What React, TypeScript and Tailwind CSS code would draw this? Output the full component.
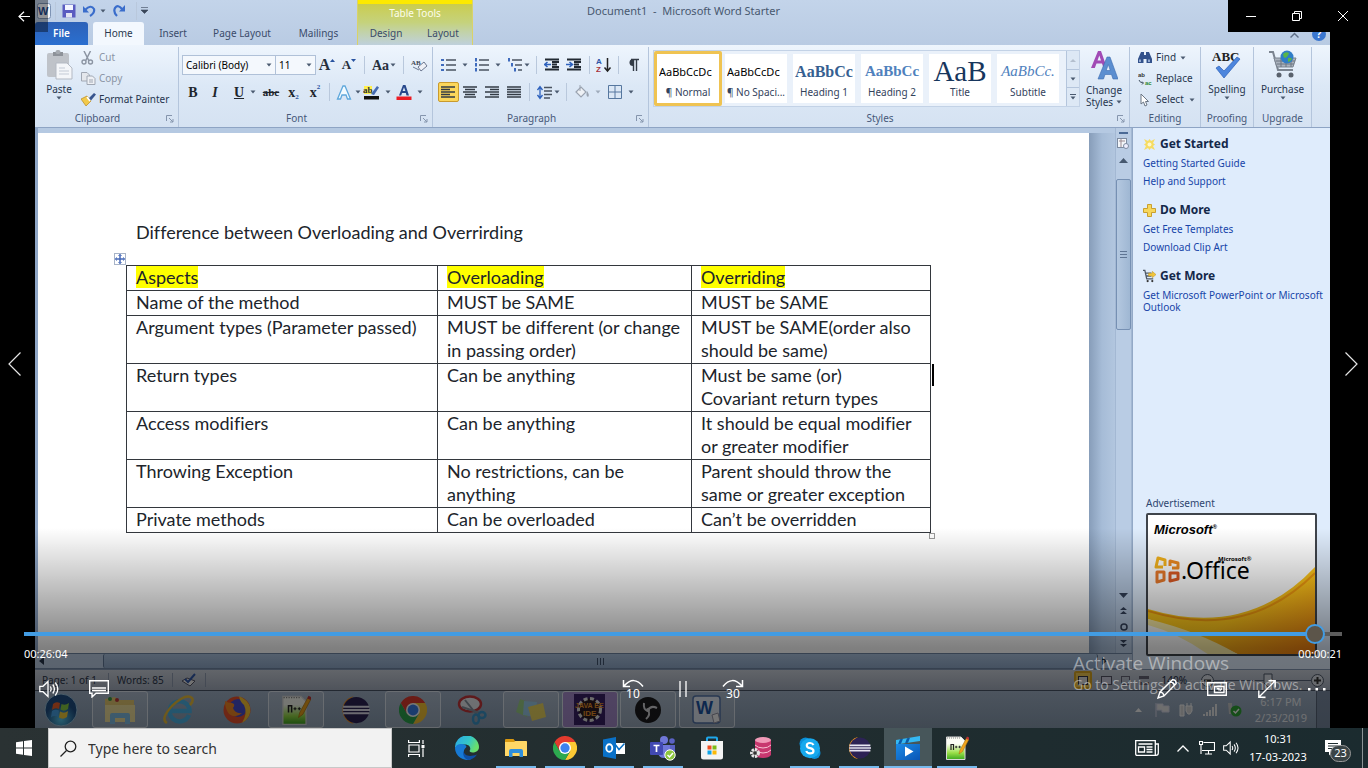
import React from "react";

type Kids = { children?: React.ReactNode };

const ui = "font-['Noto_Sans','Open_Sans',sans-serif]";

/* ---------- shared app icons ---------- */

function ChromeIcon({ size = 24 }: { size?: number }) {
  return (
    <svg width={size} height={size} viewBox="0 0 48 48" aria-hidden="true">
      <path d="M24 12H44.8A24 24 0 0 1 24 48L34.4 30Z" fill="#fcc934" />
      <path d="M13.6 30 3.2 12A24 24 0 0 0 24 48L34.4 30Z" fill="#2da94f" />
      <path d="M3.2 12A24 24 0 0 1 44.8 12H24L13.6 30Z" fill="#e33b2e" />
      <circle cx="24" cy="24" r="12" fill="#fff" />
      <circle cx="24" cy="24" r="9.3" fill="#3b82ee" />
    </svg>
  );
}

function EclipseIcon({ size = 24 }: { size?: number }) {
  return (
    <svg width={size} height={size} viewBox="0 0 24 24" aria-hidden="true">
      <path d="M11 1A11.2 11.2 0 0 0 11 23 13 13 0 0 1 11 1Z" fill="#f7941e" />
      <circle cx="13" cy="12" r="10.5" fill="#2c2255" />
      <path d="M2.5 8.6H23.4V10.2H2.5ZM2.2 11.2H24V12.8H2.2ZM2.5 13.8H23.4V15.4H2.5Z" fill="#e8e6f3" />
    </svg>
  );
}

function NotepadIcon({ size = 24 }: { size?: number }) {
  return (
    <svg width={size} height={size} viewBox="0 0 24 24" aria-hidden="true">
      <defs>
        <linearGradient id="npp" x1="0" y1="0" x2="0" y2="1">
          <stop offset=".3" stopColor="#fbfdf5" />
          <stop offset=".7" stopColor="#9be04a" />
          <stop offset="1" stopColor="#3da81f" />
        </linearGradient>
      </defs>
      <path d="M1.5 1H16L20 5V23.5H1.5Z" fill="url(#npp)" stroke="#d8d8d8" />
      <path d="M2 2H16" stroke="#888" strokeDasharray="1 1" />
      <path d="M6 14V8.5H8.5V14" fill="none" stroke="#222" strokeWidth="1.2" />
      <path d="M10 11H12.4M13.4 11H15.8M11.2 9.8V12.2M14.6 9.8V12.2" stroke="#222" strokeWidth=".9" />
      <path d="M14 18 15 14 21.5 2 24 3.2 17.5 15.5Z" fill="#f0a51c" stroke="#a66a10" strokeWidth=".5" />
      <path d="M21 2.8 22 .6 24.5 1.8 23.6 4Z" fill="#b33" />
    </svg>
  );
}

function FolderIcon({ size = 24 }: { size?: number }) {
  return (
    <svg width={size} height={size} viewBox="0 0 24 24" aria-hidden="true">
      <path d="M1 4Q1 3 2 3H9.5L11 5H22.5V9H1Z" fill="#d9980f" />
      <path d="M1 6H10L11.5 5H22Q23 5 23 6V20H1Z" fill="#ffd766" />
      <path d="M5 21V15Q5 13 7 13H17Q19 13 19 15V21H15.5V17H8.5V21Z" fill="#2f8fdc" />
    </svg>
  );
}

/* ---------- Word ribbon ---------- */

function Caret({ dim = false }: { dim?: boolean }) {
  return (
    <svg width="6" height="4" viewBox="0 0 6 4" aria-hidden="true" className="shrink-0">
      <path d="M.5.5H5.5L3 3.5Z" fill={dim ? "#9fabbb" : "#4b5a70"} />
    </svg>
  );
}

function Sep() {
  return <span className="mx-1 h-[18px] w-px shrink-0 bg-[#b9c8dc]" />;
}

function Tool({ label, className = "w-[22px]", children }: Kids & { label: string; className?: string }) {
  return (
    <button type="button" aria-label={label} className={`flex h-5 shrink-0 items-center justify-center ${className}`}>
      {children}
    </button>
  );
}

function Group({ title, className, launcher = false, children }: Kids & { title: string; className: string; launcher?: boolean }) {
  return (
    <section className={`flex shrink-0 flex-col border-r border-[#b4c5dc] ${className}`}>
      <div className="h-[64px]">{children}</div>
      <div className={`relative flex h-[15px] items-center justify-center text-[#47597a] ${launcher ? "pr-[18px]" : ""}`}>
        {title}
        {launcher && (
          <svg width="8" height="8" viewBox="0 0 8 8" className="absolute right-1 top-1" aria-hidden="true">
            <path d="M.5 6V.5H6M3 3 7 7M7 4V7H4" fill="none" stroke="#8595ad" />
          </svg>
        )}
      </div>
    </section>
  );
}

function Lines({ rows, indent = "left" }: { rows: number[]; indent?: "left" | "center" | "right" }) {
  return (
    <svg width="15" height="13" viewBox="0 0 15 13" aria-hidden="true">
      {rows.map((w, i) => {
        const x = indent === "left" ? 0 : indent === "right" ? 14 - w : (14 - w) / 2;
        return <path key={i} d={`M${x} ${1 + i * 2.5}h${w}`} stroke="#333b45" strokeWidth="1.5" />;
      })}
    </svg>
  );
}

function ClipboardGroup() {
  return (
    <Group title="Clipboard" className="w-[144px]" launcher>
      <div className="flex pl-2">
        <button type="button" className="flex h-[64px] w-8 flex-col items-center pt-[3px]">
          <svg width="28" height="30" viewBox="0 0 28 30" aria-hidden="true">
            <rect x="2" y="3" width="22" height="24" rx="2" fill="#bfc3c9" />
            <path d="M8 2H18V6H8Z" fill="#8d9299" />
            <rect x="10.5" y="0" width="5" height="4" rx="2" fill="#a5aab1" />
            <path d="M11 13H22L27 18V29H11Z" fill="#f4f6f9" stroke="#b3b9c3" />
            <path d="M14 18H20M14 21H24M14 24H24" stroke="#c3cad5" />
          </svg>
          <span className="mt-[2px] leading-[14px]">Paste</span>
          <Caret />
        </button>
        <div className="flex flex-col pl-[6px]">
          <button type="button" className="flex h-[21px] items-center gap-[5px] text-[#8b95a5]">
            <svg width="13" height="14" viewBox="0 0 13 14" aria-hidden="true">
              <path d="M3 0 8 10M9.5 0 4.5 10" stroke="#8c95a3" strokeWidth="1.5" />
              <circle cx="3" cy="11" r="2" fill="none" stroke="#8c95a3" strokeWidth="1.4" />
              <circle cx="9.5" cy="11" r="2" fill="none" stroke="#8c95a3" strokeWidth="1.4" />
            </svg>
            Cut
          </button>
          <button type="button" className="flex h-[21px] items-center gap-[3px] text-[#8b95a5]">
            <svg width="15" height="13" viewBox="0 0 15 13" aria-hidden="true">
              <path d="M.5.5H6L8.5 3V9H.5Z" fill="#e4e7ec" stroke="#a0a7b3" />
              <path d="M6 4H11.5L14 6.5V12.5H6Z" fill="#eef0f4" stroke="#a0a7b3" />
              <path d="M8 8H12M8 10H12" stroke="#a0a7b3" />
            </svg>
            Copy
          </button>
          <button type="button" className="flex h-[21px] items-center gap-[3px] whitespace-nowrap">
            <svg width="15" height="13" viewBox="0 0 15 13" aria-hidden="true">
              <path d="M0 6 6 3 10 8 5 13Z" fill="#f2c94a" stroke="#b98a20" strokeWidth=".7" />
              <path d="M6 4 9 8" stroke="#fff" strokeWidth="1.5" />
              <path d="M8 5 13 0 15 1.5 10 7.5Z" fill="#38558f" />
            </svg>
            Format Painter
          </button>
        </div>
      </div>
    </Group>
  );
}

function FontGroup() {
  return (
    <Group title="Font" className="w-[254px]" launcher>
      <div className="flex flex-col gap-[7px] pl-[3px] pt-2">
        <div className="flex items-center">
          <div className="relative w-[94px]">
            <select aria-label="Font" className="h-5 w-full appearance-none border border-[#b0c1d8] bg-[#f4f8fd] pl-[3px] text-black outline-none">
              <option>Calibri (Body)</option>
            </select>
            <span className="pointer-events-none absolute right-1 top-2"><Caret /></span>
          </div>
          <div className="relative w-10">
            <select aria-label="Font size" className="h-5 w-full appearance-none border border-l-0 border-[#b0c1d8] bg-[#f4f8fd] pl-[3px] text-black outline-none">
              <option>11</option>
            </select>
            <span className="pointer-events-none absolute right-1 top-2"><Caret /></span>
          </div>
          <Tool label="Grow font">
            <span className="font-['Liberation_Serif'] text-[16px] font-bold text-[#27303c]">A</span>
            <svg width="5" height="14" viewBox="0 0 5 14" aria-hidden="true"><path d="M0 4 2.5 1 5 4Z" fill="#2853a0" /></svg>
          </Tool>
          <Tool label="Shrink font">
            <span className="font-['Liberation_Serif'] text-[13px] font-bold text-[#27303c]">A</span>
            <svg width="5" height="14" viewBox="0 0 5 14" aria-hidden="true"><path d="M0 1 2.5 4 5 1Z" fill="#2853a0" /></svg>
          </Tool>
          <Sep />
          <Tool label="Change case" className="w-[30px] gap-px">
            <span className="font-['Liberation_Serif'] text-[14px] font-bold text-[#27303c]">Aa</span>
            <Caret />
          </Tool>
          <Sep />
          <Tool label="Clear formatting">
            <svg width="18" height="16" viewBox="0 0 18 16" aria-hidden="true">
              <text x="1" y="8" fontSize="7" fontFamily="Liberation Serif" fontWeight="bold" fill="#3c4654">AB</text>
              <path d="M8 10 14 5 17 9 11 14Z" fill="#eef1f7" stroke="#6c7890" />
              <path d="M3 10 9 13" stroke="#6c7890" />
            </svg>
          </Tool>
        </div>
        <div className="flex items-center font-['Liberation_Serif'] font-bold text-[#20252c]">
          <Tool label="Bold"><span className="text-[14px]">B</span></Tool>
          <Tool label="Italic"><span className="text-[14px] italic">I</span></Tool>
          <Tool label="Underline" className="w-[34px] gap-[6px] pl-1"><span className="text-[14px] underline">U</span><Caret /></Tool>
          <Tool label="Strikethrough" className="w-[22px]"><span className="text-[11px] line-through">abc</span></Tool>
          <Tool label="Subscript" className="w-[23px]"><span className="text-[14px]">x</span><span className="self-end text-[7px] text-[#2853a0]">2</span></Tool>
          <Tool label="Superscript" className="w-[20px]"><span className="text-[14px]">x</span><span className="self-start text-[7px] text-[#2853a0]">2</span></Tool>
          <Sep />
          <Tool label="Text effects" className="w-[28px] gap-[3px]">
            <svg width="16" height="16" viewBox="0 0 16 16" aria-hidden="true">
              <path d="M1.500 15 7 2H9L14.500 15H11.500L10 11H6L4.500 15Z" fill="#f3fbff" stroke="#5fa8dc" strokeWidth="1.3" />
            </svg>
            <Caret />
          </Tool>
          <Tool label="Highlight colour" className="w-[30px] gap-[5px]">
            <svg width="17" height="16" viewBox="0 0 17 16" aria-hidden="true">
              <path d="M1 2H9V10H1Z" fill="#fff04d" />
              <text x="0" y="9" fontSize="9" fontFamily="Liberation Serif" fontWeight="bold" fill="#333">ab</text>
              <path d="M8 10 14 2 16 3.5 11 11Z" fill="#456ab0" />
              <path d="M1 12H16V15.5H1Z" fill="#111" />
            </svg>
            <Caret />
          </Tool>
          <Tool label="Font colour" className="w-[34px] gap-[5px]">
            <svg width="16" height="16" viewBox="0 0 16 16" aria-hidden="true">
              <path d="M3 11.5 7 1H9.5L13 11.5H10.5L9.8 9H6L5.2 11.5ZM6.6 7H9.4L8 3.2Z" fill="#27488c" />
              <path d="M.5 12.5H15.5V16H.5Z" fill="#ec1c24" />
            </svg>
            <Caret />
          </Tool>
        </div>
      </div>
    </Group>
  );
}

function BulletIcon({ kind }: { kind: "dots" | "numbers" | "levels" }) {
  const shift = kind === "levels" ? 3 : 0;
  return (
    <svg width="15" height="14" viewBox="0 0 15 14" aria-hidden="true">
      {[0, 1, 2].map((i) => (
        <g key={i}>
          <path d={kind === "dots" ? `M0 ${1 + i * 5}h3v2h-3z` : `M${1 + i * shift} ${i * 5}h2v3.5h-2z`} fill="#3f6bbd" />
          <path d={`M${5 + i * shift} ${2 + i * 5}H15`} stroke="#4a5360" strokeWidth="1.5" />
        </g>
      ))}
    </svg>
  );
}

function IndentIcon({ flip = false }: { flip?: boolean }) {
  return (
    <svg width="16" height="14" viewBox="0 0 16 14" aria-hidden="true">
      <path d="M1 1.500H15M8 4H15M8 6.500H13M8 9H15M1 11.500H15" stroke="#222a33" strokeWidth="1.8" />
      <path d={flip ? "M0 6.5H6M3.5 4 6.5 6.5 3.5 9" : "M7 6.5H1M3.5 4 .5 6.5 3.5 9"} fill="none" stroke="#2e62bd" strokeWidth="1.6" />
    </svg>
  );
}

function ParagraphGroup() {
  return (
    <Group title="Paragraph" className="w-[216px]" launcher>
      <div className="flex flex-col gap-[7px] pl-[5px] pt-2">
        <div className="flex items-center">
          <Tool label="Bullets" className="w-[32px] gap-[6px]"><BulletIcon kind="dots" /><Caret /></Tool>
          <Tool label="Numbering" className="w-[34px] gap-[6px]"><BulletIcon kind="numbers" /><Caret /></Tool>
          <Tool label="Multilevel list" className="w-[28px] gap-[2px]"><BulletIcon kind="levels" /><Caret /></Tool>
          <Sep />
          <Tool label="Decrease indent"><IndentIcon /></Tool>
          <Tool label="Increase indent"><IndentIcon flip /></Tool>
          <Sep />
          <Tool label="Sort" className="w-[20px]">
            <svg width="16" height="16" viewBox="0 0 16 16" aria-hidden="true">
              <text x="0" y="7" fontSize="8" fontFamily="Liberation Sans" fontWeight="bold" fill="#2e55a5">A</text>
              <text x="0" y="15" fontSize="8" fontFamily="Liberation Sans" fontWeight="bold" fill="#a8323a">Z</text>
              <path d="M11.5 1V13M8.5 10.5 11.5 14 14.5 10.5" fill="none" stroke="#222" strokeWidth="1.5" />
            </svg>
          </Tool>
          <Sep />
          <Tool label="Show marks" className="w-[20px]">
            <svg width="11" height="14" viewBox="0 0 11 14" aria-hidden="true">
              <path d="M5 1A3.5 3.5 0 0 0 5 8Z" fill="#333b46" />
              <path d="M3 1.5H11M5.5 1V13M8.5 1V13" stroke="#333b46" strokeWidth="1.4" />
            </svg>
          </Tool>
        </div>
        <div className="flex items-center">
          <Tool label="Align left" className="w-[21px] rounded-[2px] border border-[#c99a2e] bg-[#fbd65b]"><Lines rows={[14, 9, 14, 9, 14]} /></Tool>
          <Tool label="Centre"><Lines rows={[14, 10, 14, 10, 12]} indent="center" /></Tool>
          <Tool label="Align right"><Lines rows={[14, 9, 14, 9, 14]} indent="right" /></Tool>
          <Tool label="Justify"><Lines rows={[14, 14, 14, 14, 14]} /></Tool>
          <Sep />
          <Tool label="Line spacing" className="w-[28px] gap-[2px]">
            <svg width="15" height="15" viewBox="0 0 15 15" aria-hidden="true">
              <path d="M3 2V13M.5 5 3 1.5 5.5 5M.5 10 3 13.5 5.500 10" fill="none" stroke="#2e62bd" strokeWidth="1.3" />
              <path d="M7 2.500H15M7 6H15M7 9.500H15M7 13H13" stroke="#4a5360" strokeWidth="1.4" />
            </svg>
            <Caret />
          </Tool>
          <Sep />
          <Tool label="Shading" className="w-[34px] gap-[5px]">
            <svg width="15" height="14" viewBox="0 0 15 14" aria-hidden="true">
              <path d="M1 7 6 2 11 7 6 12Z" fill="#eef1f5" stroke="#9aa3b0" strokeWidth="1.2" />
              <path d="M5 0V6" stroke="#9aa3b0" />
              <path d="M12 6Q15 10 13 12Q10.5 11 12 6Z" fill="#9aa3b0" />
            </svg>
            <Caret dim />
          </Tool>
          <Tool label="Borders" className="w-[32px] gap-[6px]">
            <svg width="14" height="14" viewBox="0 0 14 14" aria-hidden="true">
              <path d="M.5.5H13.500V13.500H.5ZM7 .5V13.500M.5 7H13.500" fill="none" stroke="#56779f" />
            </svg>
            <Caret />
          </Tool>
        </div>
      </div>
    </Group>
  );
}

const styleTiles = [
  { name: "¶ Normal", sample: "AaBbCcDc", cls: "text-[11px] text-black", active: true },
  { name: "¶ No Spaci...", sample: "AaBbCcDc", cls: "text-[11px] text-black" },
  { name: "Heading 1", sample: "AaBbCc", cls: "font-['Liberation_Serif'] text-[16px] font-bold text-[#365f91]" },
  { name: "Heading 2", sample: "AaBbCc", cls: "font-['Liberation_Serif'] text-[15px] font-bold text-[#4f81bd]" },
  { name: "Title", sample: "AaB", cls: "font-['Liberation_Serif'] text-[29px] text-[#17365d]" },
  { name: "Subtitle", sample: "AaBbCc.", cls: "font-['Liberation_Serif'] text-[15px] italic text-[#4f81bd]" },
];

function StylesGroup() {
  return (
    <Group title="Styles" className="w-[481px]" launcher>
      <div className="flex pl-1 pt-[3px]">
        <div className="flex h-[57px] border border-[#c3d2e6] bg-[#eaf1fa]">
          <div className="flex w-[412px]">
            {styleTiles.map((t) => (
              <button
                type="button"
                key={t.name}
                className={`flex h-[55px] w-[68px] shrink-0 flex-col items-center rounded-[2px] border-[3px] bg-white ${t.active ? "border-[#efc352]" : "border-[#eaf1fa]"}`}
              >
                <span className={`flex h-[31px] w-[58px] items-center overflow-hidden whitespace-nowrap pt-1 leading-none ${t.active || t.name.includes("No") ? "" : "justify-center"} ${t.cls}`}>{t.sample}</span>
                <span className="whitespace-nowrap leading-[14px] text-[#33425c]">{t.name}</span>
              </button>
            ))}
          </div>
          <div className="flex w-[13px] flex-col divide-y divide-[#b4c5dc] border-l border-[#b4c5dc] bg-[#dde8f5]">
            <button type="button" aria-label="Previous styles" className="flex flex-1 items-center justify-center"><svg width="6" height="4" aria-hidden="true"><path d="M0 4 3 1 6 4Z" fill="#b4bfce" /></svg></button>
            <button type="button" aria-label="More rows" className="flex flex-1 items-center justify-center"><Caret /></button>
            <button type="button" aria-label="All styles" className="flex flex-1 flex-col items-center justify-center gap-px"><span className="h-px w-[6px] bg-[#4b5a70]" /><Caret /></button>
          </div>
        </div>
        <button type="button" className="flex w-[48px] flex-col items-center leading-[12px]">
          <svg width="28" height="30" viewBox="0 0 28 30" className="mb-[4px]" aria-hidden="true">
            <path d="M1 18 8 1H11L17 18H13.5L12 13.5H6.5L4.8 18ZM7.5 10.5H11L9.3 5.5Z" fill="#a14bb5" />
            <path d="M8 29 17 7H20L28 29H23L21.5 24.5H15L13.5 29ZM16.2 20.5H20.3L18.3 14.5Z" fill="#5b8ed0" stroke="#3c6bb0" strokeWidth=".6" />
          </svg>
          <span>Change</span>
          <span className="flex items-center gap-[3px]">Styles<Caret /></span>
        </button>
      </div>
    </Group>
  );
}

function Ribbon() {
  return (
    <div className="flex h-[83px] overflow-hidden border-b border-[#8ea4c4] bg-linear-to-b from-[#eef5fd] via-[#dce8f6] to-[#d5e2f2] pt-[2px]">
      <ClipboardGroup />
      <FontGroup />
      <ParagraphGroup />
      <StylesGroup />
      <Group title="Editing" className="w-[71px]">
        <div className="flex flex-col pl-2">
          <button type="button" className="flex h-[21px] items-center gap-1">
            <svg width="14" height="13" viewBox="0 0 14 13" aria-hidden="true">
              <path d="M3 1H6V4H8V1H11L14 8V12H8.5V8H5.5V12H0V8Z" fill="#33528c" />
              <path d="M2 8.500V11M11 8.500V11" stroke="#b6c9e8" strokeWidth="1.5" />
            </svg>
            Find <Caret />
          </button>
          <button type="button" className="flex h-[21px] items-center gap-[3px]">
            <svg width="15" height="16" viewBox="0 0 15 16" aria-hidden="true">
              <text x="0" y="6" fontSize="6" fontFamily="Liberation Sans" fontWeight="bold" fill="#333">ab</text>
              <text x="7" y="14" fontSize="6" fontFamily="Liberation Sans" fontWeight="bold" fill="#2d8a35">ac</text>
              <path d="M1 9Q2 12 5 12M4 10.5 5.5 12 4 13.5" fill="none" stroke="#456" />
            </svg>
            Replace
          </button>
          <button type="button" className="flex h-[21px] items-center gap-[5px]">
            <svg width="13" height="14" viewBox="0 0 13 14" aria-hidden="true">
              <path d="M3 1V11L5.5 9 7 13 9 12 7.5 8.5H10.5Z" fill="#fff" stroke="#6b7684" />
            </svg>
            Select <Caret />
          </button>
        </div>
      </Group>
      <Group title="Proofing" className="w-[53px]">
        <button type="button" className="flex w-full flex-col items-center pt-[3px]">
          <svg width="30" height="30" viewBox="0 0 30 30" aria-hidden="true">
            <text x="0" y="11" fontSize="13" fontFamily="Liberation Serif" fontWeight="bold" fill="#222">ABC</text>
            <path d="M4 18 7 16 12 21 25 7 28 9 12 28Z" fill="#4d86dd" stroke="#2b5fb8" strokeWidth=".7" />
          </svg>
          <span className="mt-[2px] leading-[14px]">Spelling</span>
          <Caret />
        </button>
      </Group>
      <Group title="Upgrade" className="w-[58px]">
        <button type="button" className="flex w-full flex-col items-center pt-[3px]">
          <svg width="30" height="30" viewBox="0 0 30 30" aria-hidden="true">
            <path d="M1 2H5L10 20H25" fill="none" stroke="#7b8490" strokeWidth="2" />
            <path d="M6 8H28L25 17H9Z" fill="#aab2bd" stroke="#7b8490" />
            <path d="M8 11H27M9 14H26M13 8V17M18 8V17M23 8V17" stroke="#6d7682" />
            <circle cx="19" cy="7" r="6.5" fill="#2f7dc7" />
            <path d="M15 4Q18 1 21 3Q20 7 17 8Q15 7 15 4M20 8Q23 7 24 9Q22 12 20 12Z" fill="#59b548" />
            <circle cx="11" cy="25" r="2.5" fill="#59616c" />
            <circle cx="23" cy="25" r="2.5" fill="#59616c" />
          </svg>
          <span className="mt-[2px] leading-[14px]">Purchase</span>
          <Caret />
        </button>
      </Group>
    </div>
  );
}

function TitleBar() {
  return (
    <div className="flex h-[45px] items-stretch bg-linear-to-b from-[#c3d4ea] to-[#b9cbe3]">
      <div className="flex w-[320px] flex-col">
        <div className="flex h-[22px] items-center pb-px pl-[2px]">
          <svg width="14" height="16" viewBox="0 0 14 16" aria-hidden="true">
            <rect x=".5" y=".5" width="13" height="15" rx="2" fill="#f2f6fc" stroke="#7e94b5" />
            <text x="1" y="12" fontSize="11" fontFamily="Liberation Sans" fontWeight="bold" fill="#1f4a91">W</text>
          </svg>
          <Sep />
          <Tool label="Save" className="w-[18px]">
            <svg width="14" height="14" viewBox="0 0 14 14" aria-hidden="true">
              <path d="M.5.5H13.5V13.5H.5Z" fill="#5a5cc0" />
              <path d="M3 1H11V6H3Z" fill="#f3f5ff" />
              <path d="M4 9H10V13.5H4Z" fill="#e1e4f2" />
            </svg>
          </Tool>
          <Tool label="Undo">
            <svg width="13" height="12" viewBox="0 0 13 12" aria-hidden="true">
              <path d="M2 5Q8-1 11 4Q12 8 7 11" fill="none" stroke="#3a6dcb" strokeWidth="2.2" />
              <path d="M0 1V7.5H6Z" fill="#3a6dcb" />
            </svg>
          </Tool>
          <Caret />
          <Tool label="Redo" className="w-[26px]">
            <svg width="12" height="12" viewBox="0 0 12 12" aria-hidden="true">
              <path d="M9 4Q5-1 2 3Q0 7 4 11" fill="none" stroke="#3a6dcb" strokeWidth="2.2" />
              <path d="M12 0V6.5H6Z" fill="#3a6dcb" />
            </svg>
          </Tool>
          <Sep />
          <svg width="7" height="7" viewBox="0 0 7 7" aria-hidden="true"><path d="M0 .5H7M0 3H7L3.5 6.5Z" fill="#3a465a" stroke="#3a465a" strokeWidth=".6" /></svg>
        </div>
        <div className="flex h-[23px] items-stretch text-[#3a4b6a]">
          <button type="button" className="w-[53px] rounded-t-[3px] bg-linear-to-b from-[#2d62b8] to-[#2a6fd0] font-semibold text-white">File</button>
          <button type="button" className="ml-[5px] w-[51px] rounded-t-[3px] bg-[#f3f8fe] text-[#2b3850]">Home</button>
          <button type="button" className="w-[58px]">Insert</button>
          <button type="button" className="w-[80px] whitespace-nowrap">Page Layout</button>
          <button type="button" className="w-[73px]">Mailings</button>
        </div>
      </div>
      <div className="ml-[2px] flex w-[116px] flex-col border-x border-[#d9d26a] bg-linear-to-b from-[#cccb3c] via-[#c5d27c] to-[#bfd0dc]">
        <div className="flex h-[22px] items-center justify-center border-t-4 border-[#fde900] text-[#fdfdec]">Table Tools</div>
        <div className="flex h-[23px] items-stretch text-[#3a4b6a]">
          <button type="button" className="w-[56px]">Design</button>
          <button type="button" className="flex-1">Layout</button>
        </div>
      </div>
      <div className="flex-1 whitespace-pre pl-[114px] pt-[3px] text-[11px] text-[#48586f]">Document1  -  Microsoft Word Starter</div>
      <div className="flex items-end gap-[13px] pb-1 pr-1">
        <svg width="9" height="7" viewBox="0 0 9 7" className="mb-[2px]" aria-hidden="true"><path d="M.5 5.5 4.5 1.5 8.5 5.5" fill="none" stroke="#5f6f87" strokeWidth="1.5" /></svg>
        <span className="flex size-[14px] items-center justify-center rounded-full bg-[#3a76cf] text-[10px] font-bold text-white">?</span>
      </div>
    </div>
  );
}

/* ---------- document ---------- */

const rows: string[][] = [
  ["Name of the method", "MUST be SAME", "MUST be SAME"],
  ["Argument types (Parameter passed)", "MUST be different (or change\nin passing order)", "MUST be SAME(order also\nshould be same)"],
  ["Return types", "Can be anything", "Must be same (or)\nCovariant return types"],
  ["Access modifiers", "Can be anything", "It should be equal modifier\nor greater modifier"],
  ["Throwing Exception", "No restrictions, can be\nanything", "Parent should throw the\nsame or greater exception"],
  ["Private methods", "Can be overloaded", "Can’t be overridden"],
];

function Page() {
  return (
    <div className="relative mt-[5px] flex-1 bg-white pl-[88px] pt-[88px] font-['Lato',sans-serif] text-[18px] leading-[23px] text-[#20242b] [font-variant-ligatures:none]">
      <p className="pl-[10px]">Difference between Overloading and Overrirding</p>
      <div className="relative mt-[21px] w-[805px]">
        <svg width="12" height="12" viewBox="0 0 12 12" className="absolute -left-3 -top-3" aria-hidden="true">
          <rect x=".5" y=".5" width="11" height="11" fill="#fff" stroke="#a8b4c8" />
          <path d="M6 1.5V10.5M1.5 6H10.5" stroke="#4468b8" strokeWidth="1.5" />
          <path d="M4.5 3 6 1.3 7.5 3M4.5 9 6 10.7 7.5 9M3 4.5 1.3 6 3 7.5M9 4.5 10.7 6 9 7.5" fill="none" stroke="#4468b8" />
        </svg>
        <table className="w-full table-fixed border-collapse text-left">
          <colgroup>
            <col className="w-[311px]" />
            <col className="w-[254px]" />
            <col />
          </colgroup>
          <thead>
            <tr>
              {["Aspects", "Overloading", "Overriding"].map((h) => (
                <th key={h} scope="col" className="border border-[#33373d] px-[9px] pb-px pt-0 font-normal">
                  <span className="bg-[#ffff00]">{h}</span>
                </th>
              ))}
            </tr>
          </thead>
          <tbody>
            {rows.map((r) => (
              <tr key={r[0]}>
                {r.map((c, i) => (
                  <td key={i} className="whitespace-pre border border-[#33373d] px-[9px] pb-px pt-0 align-top">{c}</td>
                ))}
              </tr>
            ))}
          </tbody>
        </table>
        <span className="absolute -right-[3px] top-[99px] h-[22px] w-[2px] bg-black" />
        <span className="absolute -bottom-[6px] -right-[4px] size-[6px] border border-[#9a9a9a] bg-white" />
      </div>
    </div>
  );
}

function VScroll() {
  return (
    <div className="flex w-[17px] flex-col items-center border-x border-[#a3b8d3] bg-[#b9cce4]">
      <span className="mt-1 h-[2px] w-[9px] shrink-0 bg-[#4a6a96]" />
      <svg width="13" height="13" viewBox="0 0 13 13" className="mt-[3px] shrink-0" aria-hidden="true">
        <rect x=".5" y="1.5" width="9" height="9" fill="#f3f6fa" stroke="#7d8ba0" />
        <path d="M2 4H8M4 2V10" stroke="#9b8a90" />
        <circle cx="9" cy="9" r="2.5" fill="#eef" stroke="#7d8ba0" />
      </svg>
      <button type="button" aria-label="Scroll up" className="mt-[5px] flex h-[10px] items-center"><svg width="9" height="5" aria-hidden="true"><path d="M0 5 4.5 0 9 5Z" fill="#46586f" /></svg></button>
      <div className="mt-[14px] flex h-[151px] w-full flex-col items-center justify-center gap-[2px] rounded-[2px] border border-[#7690b3] bg-linear-to-r from-[#b4c8e0] to-[#9fb7d3]">
        <span className="h-px w-[7px] bg-[#5f7593]" /><span className="h-px w-[7px] bg-[#5f7593]" /><span className="h-px w-[7px] bg-[#5f7593]" />
      </div>
      <div className="mt-auto flex flex-col items-center gap-[9px] pb-[6px]">
        <svg width="9" height="5" aria-hidden="true"><path d="M0 0H9L4.5 5Z" fill="#33415a" /></svg>
        <svg width="7" height="7" aria-hidden="true"><path d="M0 3 3.5 0 7 3ZM0 7 3.5 4 7 7Z" fill="#33415a" /></svg>
        <svg width="8" height="8" aria-hidden="true"><circle cx="4" cy="4" r="3" fill="none" stroke="#33415a" strokeWidth="1.5" /></svg>
        <svg width="7" height="7" aria-hidden="true"><path d="M0 0H7L3.5 3ZM0 4H7L3.5 7Z" fill="#33415a" /></svg>
      </div>
    </div>
  );
}

function PaneSection({ icon, title, links }: { icon: React.ReactNode; title: string; links: string[] }) {
  return (
    <section className="mb-[15px]">
      <h2 className="flex h-4 items-center gap-1 text-[12px] font-bold text-[#14284a]">
        <span className="flex w-[13px] justify-center">{icon}</span>
        {title}
      </h2>
      <div className="mt-[5px] flex flex-col gap-[6px]">
        {links.map((l) => (
          <a key={l} href="#" className="text-[10px] leading-[12px] text-[#1745a8]">{l}</a>
        ))}
      </div>
    </section>
  );
}

function OfficeAd() {
  return (
    <div className="relative mr-[9px] h-[143px] overflow-hidden rounded-[2px] border-2 border-[#3f444b] bg-white text-black">
      <svg viewBox="0 0 168 139" preserveAspectRatio="none" className="absolute inset-0 size-full" aria-hidden="true">
        <defs>
          <linearGradient id="swoosh" x1="0" y1="0" x2="1" y2="1">
            <stop offset="0" stopColor="#ffd21e" />
            <stop offset=".55" stopColor="#ffc61a" />
            <stop offset="1" stopColor="#f07a10" />
          </linearGradient>
        </defs>
        <path d="M0 94Q100 124 168 52V139H90Q50 120 0 104Z" fill="url(#swoosh)" />
        <path d="M0 96Q100 126 168 58" fill="none" stroke="#f29a10" strokeWidth="2" />
        <path d="M0 104Q50 116 90 139H60Q30 118 0 110Z" fill="#fff0a8" />
      </svg>
      <div className="relative pl-[6px] pt-[3px] font-['Liberation_Sans'] text-[13px] font-black italic leading-[18px]">Microsoft<span className="align-super text-[6px]">®</span></div>
      <div className="relative mt-[15px] flex items-center pl-[6px] font-['Noto_Sans']">
        <svg width="27" height="28" viewBox="0 0 27 28" aria-hidden="true">
          <g fill="none" strokeWidth="3" strokeLinejoin="round">
            <path d="M11 10V4L4 2 2 11H9" stroke="#f5b31b" />
            <path d="M16 10V5L24 7V12H18" stroke="#ee8a22" />
            <path d="M10 16V24L3 26V16Z" stroke="#e9792a" />
            <path d="M16 17H24V23L16 25Z" stroke="#dd5a25" />
          </g>
        </svg>
        <span className="text-[23px] leading-[32px]">.Office</span>
        <span className="absolute left-[70px] top-px text-[6px] font-bold leading-[8px]">Microsoft®</span>
      </div>
    </div>
  );
}

function StarterPane() {
  return (
    <aside className="flex w-[198px] shrink-0 flex-col border-l border-[#93a9c7] bg-[#dfecfc] pb-[13px] pl-[10px] pr-1 pt-2">
      <PaneSection
        title="Get Started"
        links={["Getting Started Guide", "Help and Support"]}
        icon={<svg width="11" height="11" viewBox="0 0 11 11" aria-hidden="true"><path d="M0 0 4 2 5.5 0 7 2 11 0 9 4 11 5.5 9 7 11 11 7 9 5.5 11 4 9 0 11 2 7 0 5.5 2 4Z" fill="#f6dc62" /><circle cx="5.5" cy="5.5" r="2" fill="#fff7c9" /></svg>}
      />
      <PaneSection
        title="Do More"
        links={["Get Free Templates", "Download Clip Art"]}
        icon={<svg width="13" height="13" viewBox="0 0 13 13" aria-hidden="true"><path d="M4.5.5H8.5V4.5H12.5V8.5H8.5V12.5H4.5V8.5H.5V4.5H4.5Z" fill="#f7d75c" stroke="#c9a02f" /></svg>}
      />
      <PaneSection
        title="Get More"
        links={["Get Microsoft PowerPoint or Microsoft Outlook"]}
        icon={<svg width="14" height="14" viewBox="0 0 14 14" aria-hidden="true"><path d="M0 1H2L4 10H11M3 4H9M3.5 7H9" fill="none" stroke="#4e5866" strokeWidth="1.4" /><circle cx="5" cy="12.5" r="1.2" fill="#333" /><circle cx="10" cy="12.5" r="1.2" fill="#333" /><path d="M6 4H10V2L14 5.5 10 9V7H6Z" fill="#f2c53a" stroke="#b98f20" strokeWidth=".5" /></svg>}
      />
      <div className="mt-auto pl-[3px]">
        <p className="mb-[2px] text-[10px] leading-[15px] text-[#2e466f]">Advertisement</p>
        <OfficeAd />
      </div>
    </aside>
  );
}

function StatusBar() {
  return (
    <div className="flex h-[21px] items-center border-t border-[#8195b0] bg-linear-to-b from-[#c9cfd9] to-[#a7b0c0] pl-[7px] pr-1 text-[#2b364a]">
      <span className="w-[66px]">Page: 1 of 1</span>
      <span className="border-l border-[#8f9bb0] px-[8px]">Words: 85</span>
      <span className="flex border-x border-[#8f9bb0] px-2">
        <svg width="16" height="14" viewBox="0 0 16 14" aria-hidden="true">
          <path d="M1 8 6 5 14 8 9 13Z" fill="#eee" stroke="#556" />
          <path d="M4 6 7 9 14 1" fill="none" stroke="#2f57a8" strokeWidth="2" />
        </svg>
      </span>
      <div className="ml-auto flex items-center gap-[9px]">
        <span className="flex h-[18px] w-[18px] items-center justify-center rounded-[2px] border-2 border-[#d9a520] bg-[#f1c851]"><span className="h-[9px] w-[10px] border border-[#334] bg-[#ddd]" /></span>
        <span className="h-[9px] w-[11px] border border-[#556] bg-[#ccd]" />
        <span className="h-[9px] w-[9px] border border-[#667]" />
        <span className="h-[9px] w-[10px] border-y-[3px] border-[#667]" />
        <span className="mx-1 text-[#1c2a45]">140%</span>
        <svg width="126" height="15" viewBox="0 0 126 15" aria-hidden="true">
          <path d="M14 7.5H112" stroke="#59657a" />
          <circle cx="7.5" cy="7.5" r="6" fill="#d7dce4" stroke="#4d5869" />
          <path d="M4 7.5H11" stroke="#333" strokeWidth="2" />
          <path d="M64 1H72V10L68 14 64 10Z" fill="#d7dce4" stroke="#4d5869" />
          <circle cx="117.5" cy="7.5" r="6" fill="#d7dce4" stroke="#4d5869" />
          <path d="M114 7.5H121M117.5 4V11" stroke="#333" strokeWidth="2" />
        </svg>
      </div>
    </div>
  );
}

/* ---------- recorded desktop taskbar ---------- */

const recorded: { name: string; framed?: boolean; hot?: boolean; icon: React.ReactNode }[] = [
  { name: "Explorer", framed: true, icon: (
    <svg width="34" height="30" viewBox="0 0 34 30" aria-hidden="true">
      <path d="M2 4 12 2 15 5H31V26H2Z" fill="#e9cd74" />
      <circle cx="7" cy="4" r="2" fill="#3a9b45" /><circle cx="14" cy="5" r="2" fill="#c23a3a" />
      <path d="M2 10H32V27H2Z" fill="#f7e6a0" />
      <path d="M7 29V20Q7 18 9 18H25Q27 18 27 20V29H22V23H12V29Z" fill="#86c5ec" />
    </svg>) },
  { name: "Internet Explorer", icon: (
    <svg width="32" height="30" viewBox="0 0 32 30" aria-hidden="true">
      <path d="M26 20A10 10 0 1 1 26.5 14.5V16H8" fill="none" stroke="#4fb8ec" strokeWidth="4.5" />
      <path d="M4 28Q-3 24 9 11Q23-2 29 3Q31 6 27 10" fill="none" stroke="#f0c33c" strokeWidth="2.5" />
    </svg>) },
  { name: "Firefox", icon: (
    <svg width="30" height="30" viewBox="0 0 30 30" aria-hidden="true">
      <circle cx="15" cy="15" r="13.5" fill="#f0542d" />
      <circle cx="16" cy="13" r="9" fill="#4a4fd0" />
      <path d="M3 6Q6 8 10 8Q14 9 11 13Q13 19 20 18Q14 24 7 19Q3 14 3 6Z" fill="#fb8c24" />
      <path d="M17 1Q26 5 28 12Q30 22 20 28Q26 18 22 10Q18 7 17 1Z" fill="#ffc933" />
    </svg>) },
  { name: "Notepad++", framed: true, icon: <NotepadIcon size={30} /> },
  { name: "Eclipse", icon: <EclipseIcon size={30} /> },
  { name: "Chrome", framed: true, icon: <ChromeIcon size={28} /> },
  { name: "Snipping Tool", icon: (
    <svg width="30" height="30" viewBox="0 0 30 30" aria-hidden="true">
      <ellipse cx="13" cy="9" rx="11" ry="7.5" fill="#eceff4" stroke="#c8373b" strokeWidth="2.5" />
      <path d="M8 5 20 20M5 12 23 18" stroke="#8a95a3" strokeWidth="2" />
      <ellipse cx="19" cy="24" rx="3" ry="4.500" fill="none" stroke="#3d9ad0" strokeWidth="2.5" />
      <ellipse cx="25" cy="20" rx="3.500" ry="3" fill="none" stroke="#3d9ad0" strokeWidth="2.5" />
    </svg>) },
  { name: "Sticky Notes", framed: true, icon: (
    <svg width="32" height="26" viewBox="0 0 32 26" aria-hidden="true">
      <path d="M5 2 16 6 12 20 1 15Z" fill="#9fd48a" />
      <path d="M9 4 22 5 20 20 8 18Z" fill="#9ed0ee" />
      <path d="M13 10 28 6 31 20 17 24Z" fill="#f2dc62" />
    </svg>) },
  { name: "Eclipse Java EE", framed: true, hot: true, icon: (
    <svg width="31" height="31" viewBox="0 0 31 31" aria-hidden="true">
      <rect width="31" height="31" fill="#3a2168" />
      <circle cx="15.5" cy="15.5" r="11" fill="#2a1a22" stroke="#e8e8e8" strokeWidth="3" strokeDasharray="4 2.5" />
      <text x="1" y="14" fontSize="7" fontWeight="bold" fontFamily="Liberation Sans" fill="#f3982a">JAVA EE</text>
      <text x="9" y="22" fontSize="8" fontWeight="bold" fontFamily="Liberation Sans" fill="#f3982a">IDE</text>
    </svg>) },
  { name: "OBS", framed: true, icon: (
    <svg width="28" height="28" viewBox="0 0 28 28" aria-hidden="true">
      <circle cx="14" cy="14" r="13" fill="#1b1b1e" />
      <path d="M14 15Q9 14 10 7M14 14Q17 9 23 12M14 14Q17 19 12 23" fill="none" stroke="#d8d8dc" strokeWidth="2" />
      <circle cx="14" cy="14" r="2" fill="#d8d8dc" />
    </svg>) },
  { name: "Word", framed: true, icon: (
    <svg width="30" height="30" viewBox="0 0 30 30" aria-hidden="true">
      <rect x="1" y="1" width="27" height="27" rx="3" fill="#e8effa" stroke="#5577ad" strokeWidth="1.5" />
      <text x="4" y="19" fontSize="18" fontWeight="bold" fontFamily="Liberation Sans" fill="#1d57a8">W</text>
      <path d="M20 20 26 18 28 26 22 28Z" fill="#fff" stroke="#99a" />
    </svg>) },
];

function RecordedTaskbar() {
  return (
    <div className="flex h-[38px] items-stretch border-t border-[#4a5567] bg-linear-to-b from-[#a2b3c8] to-[#8fa2b7]">
      <div className="flex w-[57px] items-center justify-center pr-[6px]">
        <svg width="34" height="34" viewBox="0 0 34 34" aria-hidden="true">
          <defs><radialGradient id="orb" cy=".8"><stop offset="0" stopColor="#5bd0f5" /><stop offset="1" stopColor="#1f4f86" /></radialGradient></defs>
          <circle cx="17" cy="17" r="16" fill="url(#orb)" stroke="#9cc4dd" />
          <path d="M9 11Q12 8 16 10L15 16Q11 14 8 17Z" fill="#f4632a" />
          <path d="M17.500 11Q21 13 25 10L24 16Q20 19 16.500 16.500Z" fill="#8bd145" />
          <path d="M8 18Q11 16 15 17.500L14 24Q10 22 7 24.500Z" fill="#4aa8ee" />
          <path d="M16 18.500Q20 21 24 18L23 24Q19 27 15 24.500Z" fill="#fbd33b" />
        </svg>
      </div>
      <div className="flex w-[643px] justify-between">
        {recorded.map((r) => (
          <div
            key={r.name}
            className={`flex w-[56px] items-center justify-center rounded-[3px] border ${r.framed ? "border-[#dfe7f0]" : "border-transparent"} ${r.hot ? "bg-[#a98fd0]" : r.framed ? "bg-white/15" : ""}`}
          >
            {r.icon}
          </div>
        ))}
      </div>
      <div className="ml-auto flex items-center gap-[9px] text-[#f2f5f9]">
        <svg width="7" height="4" aria-hidden="true"><path d="M0 4 3.5 0 7 4Z" fill="#fff" /></svg>
        <svg width="15" height="14" viewBox="0 0 15 14" className="ml-1" aria-hidden="true"><path d="M1 0V14M2 1H8V3H14V9H7V7H2Z" fill="#eee" stroke="#dde" /></svg>
        <svg width="15" height="15" viewBox="0 0 15 15" aria-hidden="true"><path d="M1 3H5V14H1ZM7 4H13V9L11 12H9L7 9ZM8 1V4M12 1V4" fill="#ddd" stroke="#fff" /></svg>
        <svg width="15" height="12" viewBox="0 0 15 12" aria-hidden="true"><path d="M0 10H2V12H0ZM3 8H5V12H3ZM6 6H8V12H6ZM9 3H11V12H9ZM12 0H14V12H12Z" fill="#eee" /></svg>
        <svg width="15" height="15" viewBox="0 0 15 15" aria-hidden="true"><path d="M1 1H5V12H2Z" fill="#ccc" /><circle cx="9" cy="9" r="5.5" fill="#2fa836" /><path d="M6.5 9 8.5 11 12 7" fill="none" stroke="#fff" strokeWidth="1.5" /></svg>
        <div className="ml-1 text-center text-[11px] leading-[16px]">6:17 PM<br />2/23/2019</div>
        <span className="h-full w-[14px] border-l border-[#59667a] bg-[#7d8ea5]" />
      </div>
    </div>
  );
}

function WordWindow() {
  return (
    <div className={`flex flex-1 flex-col overflow-hidden text-[10px] text-[#27364f] ${ui}`}>
      <TitleBar />
      <Ribbon />
      <div className="flex min-h-0 flex-1 bg-[#b5c9e2]">
        <div className="flex min-w-0 flex-1 flex-col">
          <div className="flex min-h-0 flex-1">
            <div className="w-[3px] bg-[#8fa6c6]" />
            <div className="flex min-w-0 flex-1 flex-col"><Page /></div>
            <div className="mt-[5px] w-[26px] bg-linear-to-r from-[#879db9] via-[#a6bcd7] to-[#b2c6df]" />
            <VScroll />
          </div>
          <div className="flex h-[16px] items-stretch border-y border-[#6e84a2] bg-[#b9cbe2] pl-1">
            <button type="button" aria-label="Scroll left" className="flex w-16 items-center"><svg width="5" height="8" aria-hidden="true"><path d="M5 0V8L0 4Z" fill="#243349" /></svg></button>
            <div className="flex flex-1 items-center justify-center gap-[2px] rounded-[2px] border-x border-[#5f7695] bg-linear-to-b from-[#a9c0dc] to-[#8fa8c7]">
              <span className="h-[7px] w-px bg-[#40536e]" /><span className="h-[7px] w-px bg-[#40536e]" /><span className="h-[7px] w-px bg-[#40536e]" />
            </div>
            <button type="button" aria-label="Scroll right" className="flex w-[34px] items-center justify-start pl-1"><svg width="5" height="8" aria-hidden="true"><path d="M0 0V8L5 4Z" fill="#243349" /></svg></button>
          </div>
        </div>
        <StarterPane />
      </div>
      <StatusBar />
      <RecordedTaskbar />
    </div>
  );
}

/* ---------- player overlay ---------- */

function PlayerButton({ label, children }: Kids & { label: string }) {
  return (
    <button type="button" aria-label={label} className="flex h-8 w-[50px] items-center justify-center text-white">
      {children}
    </button>
  );
}

function Skip({ seconds, forward = false }: { seconds: number; forward?: boolean }) {
  return (
    <span className="flex flex-col items-center">
      <svg width="22" height="9" viewBox="0 0 22 9" aria-hidden="true">
        <path d={forward ? "M1 7.5Q10-4 20 7M20.5 1V7.5H14" : "M21 7.5Q12-4 2 7M1.5 1V7.5H8"} fill="none" stroke="#fff" strokeWidth="1.5" />
      </svg>
      <span className="text-[12px] leading-[11px]">{seconds}</span>
    </span>
  );
}

function Speaker({ size = 20 }: { size?: number }) {
  return (
    <svg width={size} height={size} viewBox="0 0 20 20" fill="none" stroke="#fff" strokeWidth="1.3" aria-hidden="true">
      <path d="M.8 7.3H4L9 2.5V17.5L4 12.7H.8Z" />
      <path d="M11.3 7.5Q13 10 11.3 12.5M13.8 5.5Q17 10 13.8 14.5M16.3 3.5Q21.3 10 16.3 16.5" />
    </svg>
  );
}

const total = 1585;
const elapsed = 1564;

function PlayerOverlay() {
  const stop = `calc(10px + (100% - 20px) * ${elapsed / total})`;
  return (
    <>
      <button type="button" aria-label="Back" className="absolute left-0 top-0 flex h-8 w-12 items-center justify-center bg-black/40">
        <svg width="12" height="11" viewBox="0 0 12 11" aria-hidden="true"><path d="M12 5.5H1M6 .7 1 5.5 6 10.3" fill="none" stroke="#fff" strokeWidth="1.2" /></svg>
      </button>
      <div className="absolute right-0 top-0 flex h-8 w-[140px] bg-black">
        <button type="button" aria-label="Minimize" className="flex w-[46px] items-center justify-center"><svg width="10" height="10" aria-hidden="true"><path d="M0 5.5H10" stroke="#fff" /></svg></button>
        <button type="button" aria-label="Restore" className="flex w-[46px] items-center justify-center"><svg width="10" height="10" viewBox="0 0 10 10" aria-hidden="true"><path d="M.5 2.5H7.5V9.5H.5ZM2.5 2.5V.5H9.5V7.5H7.5" fill="none" stroke="#fff" /></svg></button>
        <button type="button" aria-label="Close" className="flex w-[46px] items-center justify-center"><svg width="10" height="10" viewBox="0 0 10 10" aria-hidden="true"><path d="M0 0 10 10M10 0 0 10" stroke="#fff" /></svg></button>
      </div>
      <button type="button" aria-label="Previous" className="absolute left-[8px] top-1/2 flex h-6 w-[14px] -translate-y-1/2 items-center">
        <svg width="13" height="24" viewBox="0 0 13 24" aria-hidden="true"><path d="M12.5.5 1 12 12.5 23.5" fill="none" stroke="#e6e6e6" strokeWidth="1.2" /></svg>
      </button>
      <button type="button" aria-label="Next" className="absolute right-[9px] top-1/2 flex h-6 w-[14px] -translate-y-1/2 items-center">
        <svg width="13" height="24" viewBox="0 0 13 24" aria-hidden="true"><path d="M.5.5 12 12 .5 23.5" fill="none" stroke="#e6e6e6" strokeWidth="1.2" /></svg>
      </button>
      <div className="absolute inset-x-0 bottom-0 flex h-[200px] flex-col justify-end bg-linear-to-b from-transparent via-black/50 via-60% to-black/55 pb-[23px] pl-6 pr-[26px] text-white">
        <input
          type="range"
          aria-label="Seek"
          min={0}
          max={total}
          defaultValue={elapsed}
          style={{ backgroundImage: `linear-gradient(to right, #429ce3 ${stop}, #5c5c5c ${stop})` }}
          className="mb-[10px] block h-1 w-full appearance-none bg-no-repeat [&::-webkit-slider-thumb]:size-5 [&::-webkit-slider-thumb]:appearance-none [&::-webkit-slider-thumb]:rounded-full [&::-webkit-slider-thumb]:border-2 [&::-webkit-slider-thumb]:border-[#429ce3] [&::-webkit-slider-thumb]:bg-[#5c554a]"
        />
        <div className="mb-[11px] flex justify-between text-[11px] leading-[16px]">
          <span>00:26:04</span>
          <span>00:00:21</span>
        </div>
        <div className="grid grid-cols-3">
          <div className="flex">
            <PlayerButton label="Volume"><Speaker /></PlayerButton>
            <PlayerButton label="Subtitles">
              <svg width="20" height="18" viewBox="0 0 20 18" fill="none" stroke="#fff" strokeWidth="1.4" aria-hidden="true">
                <path d="M.7.7H19.3V13.3H7L3 17V13.3H.7ZM3 8H17M3 10.5H17" />
              </svg>
            </PlayerButton>
          </div>
          <div className="flex justify-center">
            <PlayerButton label="Skip back"><Skip seconds={10} /></PlayerButton>
            <PlayerButton label="Pause"><svg width="8" height="16" aria-hidden="true"><path d="M1 0V16M7 0V16" stroke="#fff" strokeWidth="1.3" /></svg></PlayerButton>
            <PlayerButton label="Skip forward"><Skip seconds={30} forward /></PlayerButton>
          </div>
          <div className="flex justify-end">
            <PlayerButton label="Edit">
              <svg width="20" height="20" viewBox="0 0 20 20" fill="none" stroke="#fff" strokeWidth="1.4" aria-hidden="true">
                <path d="M1 19 3 13 15.5.8Q19 .5 19.2 4.5L7 17ZM3 13Q6.5 13.5 7 17M13.5 3Q17 3.5 17.2 6.5" />
              </svg>
            </PlayerButton>
            <PlayerButton label="Mini view">
              <svg width="20" height="14" viewBox="0 0 20 14" fill="none" stroke="#fff" strokeWidth="1.4" aria-hidden="true">
                <path d="M.7.7H19.3V13.3H.7ZM7.5 4.5H17V10.5H7.5ZM10 6.5H12V8.5M15 6.5 13 8.5" />
              </svg>
            </PlayerButton>
            <PlayerButton label="Full screen">
              <svg width="18" height="18" viewBox="0 0 18 18" fill="none" stroke="#fff" strokeWidth="1.4" aria-hidden="true">
                <path d="M1 17 17 1M10.5.8H17.2V7.5M.8 10.5V17.2H7.5" />
              </svg>
            </PlayerButton>
            <PlayerButton label="More">
              <svg width="18" height="3" aria-hidden="true"><path d="M0 0H2.5V2.5H0ZM7.5 0H10V2.5H7.5ZM15 0H17.5V2.5H15Z" fill="#fff" /></svg>
            </PlayerButton>
          </div>
        </div>
      </div>
      <div className="pointer-events-none absolute bottom-[33px] right-[58px] w-[237px] whitespace-nowrap font-['Open_Sans'] text-white/45">
        <p className="text-[19px] leading-[24px]">Activate Windows</p>
        <p className="text-[14px] leading-[20px]">Go to Settings to activate Windows.</p>
      </div>
    </>
  );
}

/* ---------- taskbar ---------- */

const apps: { name: string; state?: "open" | "active"; icon: React.ReactNode }[] = [
  { name: "Edge", icon: (
    <svg width="24" height="24" viewBox="0 0 24 24" aria-hidden="true">
      <defs>
        <linearGradient id="edgeTop" x1="0" y1="0" x2="1" y2=".4"><stop offset="0" stopColor="#2aa7e8" /><stop offset=".6" stopColor="#35c6c8" /><stop offset="1" stopColor="#6adf6b" /></linearGradient>
      </defs>
      <path d="M0 12A12 12 0 0 1 24 11C24 15 20.5 16.5 17.5 16.5C15 16.5 14 15.5 15 14C16 12 14.5 8.5 10 8.5C5 8.5 1 11 0 12Z" fill="url(#edgeTop)" />
      <path d="M0 12.5C1 8 6 7.5 9 8.5C12 9.5 12 11 10 12.5C7 16 10 22.5 16 23.2A12 12 0 0 1 0 12.5Z" fill="#1779d4" />
      <path d="M8.5 15C9 19.5 14 21.5 22 18.5A12 12 0 0 1 13 24C9 22.5 7.5 18.5 8.5 15Z" fill="#0e4fa5" />
    </svg>) },
  { name: "File Explorer", state: "open", icon: <FolderIcon /> },
  { name: "Chrome", state: "open", icon: <ChromeIcon /> },
  { name: "Outlook", state: "open", icon: (
    <svg width="24" height="24" viewBox="0 0 24 24" aria-hidden="true">
      <path d="M12 7H23V18H12Z" fill="#fff" />
      <path d="M12.5 7.5 17 13.5 22.5 7.5" fill="none" stroke="#0a6fc2" strokeWidth="1.5" />
      <path d="M1 3.5 14 1V23L1 20.5Z" fill="#0a71c7" />
      <ellipse cx="7.3" cy="12" rx="3" ry="3.8" fill="none" stroke="#fff" strokeWidth="1.9" />
    </svg>) },
  { name: "Teams", state: "open", icon: (
    <svg width="26" height="26" viewBox="0 0 26 26" aria-hidden="true">
      <circle cx="14" cy="5" r="4" fill="#6f77d8" /><circle cx="22" cy="6" r="2.8" fill="#5b62c4" />
      <path d="M8 10H20V18Q19 23 14 23Q9 23 8 18Z" fill="#6f77d8" /><path d="M20 10H25V17Q24 20 20 19Z" fill="#5b62c4" />
      <rect x="0" y="7" width="13" height="13" rx="1" fill="#4149b2" />
      <path d="M3.5 10.5H9.5M6.5 10.5V17" stroke="#fff" strokeWidth="1.7" />
      <circle cx="20" cy="20" r="5.2" fill="#8dc63f" stroke="#fff" /><path d="M17.5 20 19.5 22 23 18" fill="none" stroke="#fff" strokeWidth="1.5" />
    </svg>) },
  { name: "Store", icon: (
    <svg width="24" height="24" viewBox="0 0 24 24" aria-hidden="true">
      <path d="M7 6V2.5Q7 1.5 8 1.5H16Q17 1.5 17 2.5V6" fill="none" stroke="#1fa8ec" strokeWidth="2" />
      <path d="M1 5H23V21Q23 23.5 20.5 23.5H3.5Q1 23.5 1 21Z" fill="#f4f4f4" />
      <path d="M7.5 9.5H11.5V13.5H7.5Z" fill="#f04e23" /><path d="M12.5 9.5H16.5V13.5H12.5Z" fill="#7cbb17" />
      <path d="M7.5 14.5H11.5V18.5H7.5Z" fill="#0ea5e9" /><path d="M12.5 14.5H16.5V18.5H12.5Z" fill="#fbb906" />
    </svg>) },
  { name: "Database", icon: (
    <svg width="24" height="24" viewBox="0 0 24 24" aria-hidden="true">
      <path d="M6 4V19Q8 22 14 22Q20 22 22 19V4Z" fill="#c8386f" />
      <ellipse cx="14" cy="4" rx="8" ry="3" fill="#f09ab8" />
      <path d="M6 9Q9 12 14 12Q19 12 22 9M6 14Q9 17 14 17Q19 17 22 14" fill="none" stroke="#f7c1d3" />
      <circle cx="6" cy="17" r="3.5" fill="#777" stroke="#e6e6e6" strokeWidth="3" strokeDasharray="2.2 1" /><circle cx="6" cy="17" r="1.5" fill="#333" />
    </svg>) },
  { name: "Skype", state: "open", icon: (
    <svg width="24" height="24" viewBox="0 0 24 24" aria-hidden="true">
      <circle cx="7.5" cy="7.5" r="6" fill="#0a8fd8" /><circle cx="16.5" cy="17" r="6" fill="#0a8fd8" />
      <circle cx="12" cy="12.2" r="10" fill="#16a9ee" />
      <path d="M15.5 9Q14.5 7 12 7Q8.8 7 8.8 9.5Q8.8 11.5 12 12.1Q15.5 12.8 15.5 14.9Q15.5 17.3 12 17.3Q9 17.3 8.3 15" fill="none" stroke="#fff" strokeWidth="2.2" />
    </svg>) },
  { name: "Eclipse", state: "open", icon: <EclipseIcon /> },
  { name: "Films & TV", state: "active", icon: (
    <svg width="24" height="24" viewBox="0 0 24 24" aria-hidden="true">
      <defs><linearGradient id="film" x1="0" y1="0" x2="1" y2="1"><stop offset="0" stopColor="#1b8be6" /><stop offset="1" stopColor="#0a55b5" /></linearGradient></defs>
      <path d="M0 4 24 0V5L0 8.5Z" fill="#35b9f3" />
      <path d="M4 3.3 7 2.8 5 7.7 2 8.2ZM11 2.2 14 1.7 12 6.7 9 7.2Z" fill="#0c5aa8" />
      <path d="M0 8H24V24H0Z" fill="url(#film)" /><path d="M9 10.5 17.5 15.5 9 20.5Z" fill="#fff" />
    </svg>) },
  { name: "Notepad++", state: "open", icon: <NotepadIcon /> },
];

function Taskbar() {
  return (
    <footer className={`flex h-10 shrink-0 items-stretch bg-linear-to-r from-[#2a3233] via-[#212d2f] to-[#1b2b2f] ${ui}`}>
      <button type="button" aria-label="Start" className="flex w-12 items-center justify-center">
        <svg width="16" height="16" viewBox="0 0 16 16" aria-hidden="true"><path d="M0 2.3 7 1.3V7.5H0ZM8 1.1 16 0V7.5H8ZM0 8.5H7V14.7L0 13.7ZM8 8.5H16V16L8 14.9Z" fill="#fff" /></svg>
      </button>
      <label className="flex w-[344px] items-center gap-[11px] border border-[#c8c8c8] bg-[#f2f2f2] pl-[11px]">
        <svg width="17" height="17" viewBox="0 0 17 17" aria-hidden="true"><circle cx="10.5" cy="6.5" r="5.3" fill="none" stroke="#222" strokeWidth="1.3" /><path d="M6.5 10.5.5 16.5" stroke="#222" strokeWidth="1.3" /></svg>
        <input type="text" aria-label="Search" placeholder="Type here to search" className="min-w-0 flex-1 bg-transparent text-[14px] text-[#333] outline-none placeholder:text-[#333]" />
      </label>
      <button type="button" aria-label="Task view" className="mr-[3px] flex w-12 items-center justify-center">
        <svg width="17" height="17" viewBox="0 0 17 17" fill="none" stroke="#fff" strokeWidth="1.2" aria-hidden="true">
          <path d="M.6 0V2.5H11.4V0M.6 17V14.5H11.4V17M1 5H11V12H1ZM15 0V4M15 8.5V17" /><path d="M13.5 5H16.5V8H13.5Z" fill="#fff" stroke="none" />
        </svg>
      </button>
      <div className="flex gap-px">
        {apps.map((a) => (
          <button type="button" key={a.name} aria-label={a.name} className={`relative flex w-12 items-center justify-center ${a.state === "active" ? "bg-[#47565a]" : ""}`}>
            {a.icon}
            {a.state && <span className={`absolute bottom-0 h-[2px] bg-[#76b9ed] ${a.state === "active" ? "inset-x-0" : "inset-x-1"}`} />}
          </button>
        ))}
      </div>
      <div className="ml-auto flex items-center text-white">
        <button type="button" aria-label="News" className="mr-[18px]">
          <svg width="24" height="16" viewBox="0 0 24 16" fill="none" stroke="#fff" strokeWidth="1.3" aria-hidden="true"><path d="M.7.7H20.3V15.3H2Q.7 15.3.7 14ZM20.3 4H23.3V13Q23.3 15.3 21 15.3H18M3.5 4H17.5M3.5 7H9.5V12H3.5ZM11.5 7H17.5M11.5 9.5H17.5M11.5 12H17.5" /></svg>
        </button>
        <button type="button" aria-label="Hidden icons" className="mr-[10px]"><svg width="12" height="7" viewBox="0 0 12 7" aria-hidden="true"><path d="M.5 6.5 6 1 11.5 6.5" fill="none" stroke="#fff" strokeWidth="1.3" /></svg></button>
        <button type="button" aria-label="Network" className="mr-2">
          <svg width="16" height="14" viewBox="0 0 16 14" fill="none" stroke="#fff" strokeWidth="1.1" aria-hidden="true"><path d="M4.5 1.5H15.5V9.5H3M9.5 9.5V13M6 13H13M.5.5H3.5V3.5H.5ZM2 3.5V13" /></svg>
        </button>
        <button type="button" aria-label="Volume" className="mr-[9px]"><Speaker size={16} /></button>
        <button type="button" className="w-[60px] whitespace-nowrap text-center text-[11px] leading-[18px]">10:31<br />17-03-2023</button>
        <button type="button" aria-label="Notifications" className="relative ml-[17px] mr-[9px] flex w-7">
          <svg width="16" height="16" viewBox="0 0 16 16" aria-hidden="true"><path d="M0 0H16V12H7L4 15.5V12H0Z" fill="#fff" /><path d="M3 3.5H13M3 6H13M3 8.5H10" stroke="#1f2d30" /></svg>
          <span className="absolute -bottom-[6px] left-[5px] flex h-[17px] w-[21px] items-center justify-center rounded-full border border-[#999] bg-[#3a4446] text-[11px]">23</span>
        </button>
        <span className="mr-[5px] h-full w-px bg-[#8a9395]" />
      </div>
    </footer>
  );
}

export default function App() {
  return (
    <div className="flex h-screen min-h-[640px] flex-col overflow-hidden bg-black">
      <main className={`relative flex min-h-0 flex-1 pl-[35px] pr-[38px] ${ui}`}>
        <WordWindow />
        <PlayerOverlay />
      </main>
      <Taskbar />
    </div>
  );
}
